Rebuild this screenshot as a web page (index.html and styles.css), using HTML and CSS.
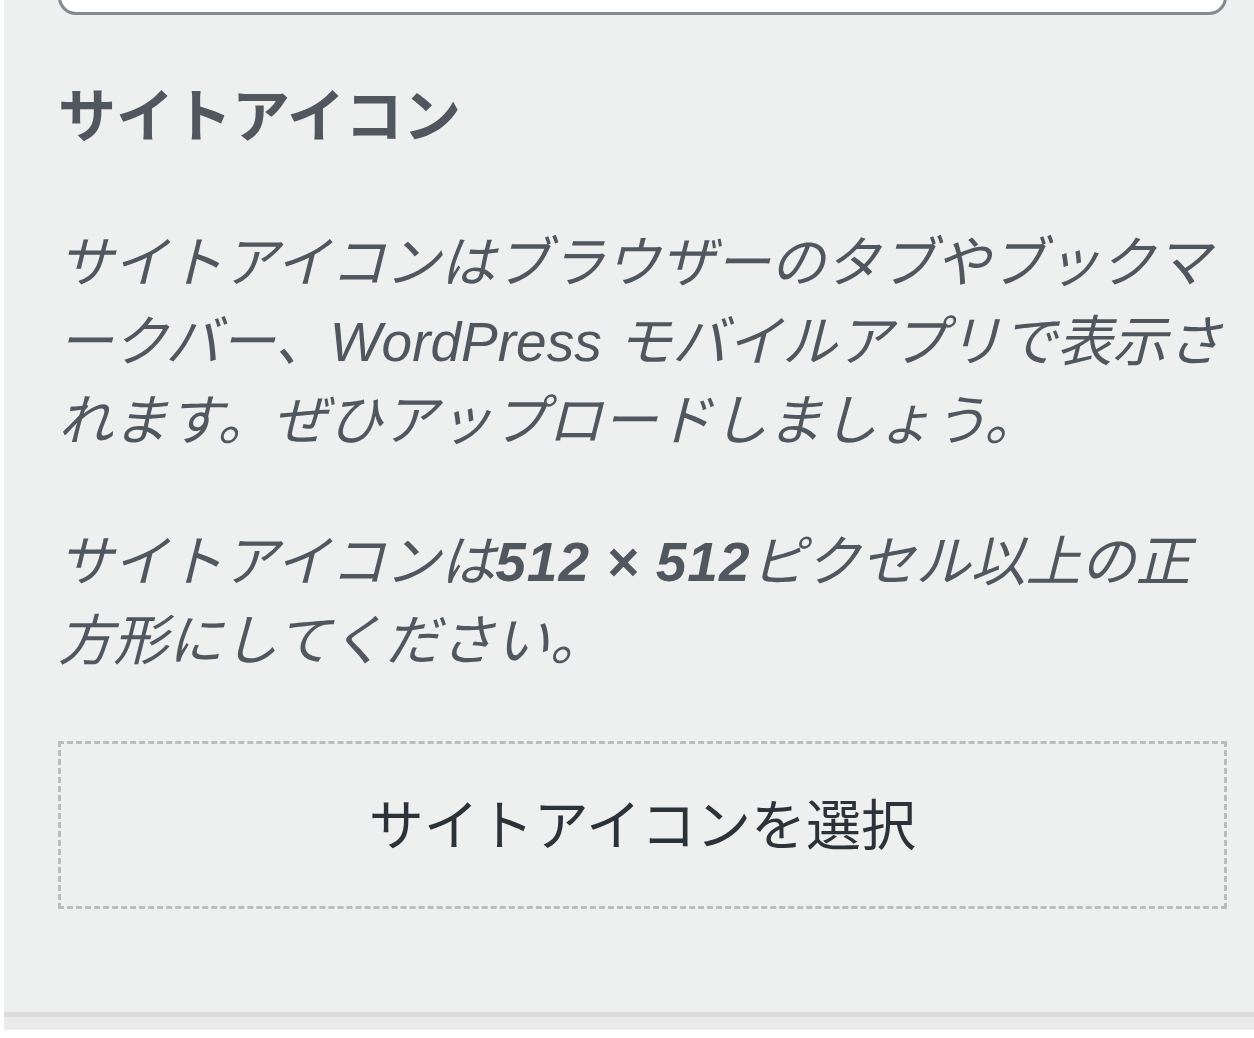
FILE: index.html
```
<!DOCTYPE html>
<html lang="ja">
<head>
    <meta charset="UTF-8">
    <meta name="viewport" content="width=device-width, initial-scale=1.0">
    <title>サイトアイコン</title>
    <link rel="stylesheet" href="styles.css">
</head>
<body>
    <div class="panel">
        <div class="field"></div>
        <h3 class="control-title">サイトアイコン</h3>
        <p class="description">サイトアイコンはブラウザーのタブやブックマークバー、WordPress モバイルアプリで表示されます。ぜひアップロードしましょう。</p>
        <p class="description description-size">サイトアイコンは<strong>512 × 512</strong>ピクセル以上の正方形にしてください。</p>
        <button class="upload-button" type="button"><span>サイトアイコンを選択</span></button>
        <div class="panel-footer"></div>
    </div>
</body>
</html>
```

FILE: styles.css
```
:root {
    --panel-bg: #eeefef;
    --text: #50575e;
    --dark: #2c3338;
    --dash: #bbbdc1;
}
body {
    margin: 0;
    background: #fff;
    font-family: "Liberation Sans", "Noto Sans CJK JP", sans-serif;
    overflow: hidden;
}
.panel {
    margin-left: 4px;
    height: 1030px;
    background: var(--panel-bg);
    padding: 0 27px 0 54px;
    display: flex;
    flex-direction: column;
    overflow: hidden;
}
.field {
    flex: none;
    height: 40px;
    margin-top: -31px;
    background: #fff;
    border: 3px solid #868a90;
    border-radius: 18px;
}
.control-title {
    margin: 62px 0 0;
    font-size: 58px;
    line-height: 80px;
    font-weight: 700;
    color: var(--text);
}
.description {
    margin: 67px 0 0;
    font-size: 55px;
    line-height: 79px;
    font-style: italic;
    color: var(--text);
}
.description strong {
    letter-spacing: 1px;
}
.description-size {
    margin-top: 62px;
}
.upload-button {
    flex: none;
    margin-top: 60px;
    height: 168px;
    padding: 0 0 8px;
    background: transparent;
    border: 3px dashed var(--dash);
    font-family: inherit;
    font-size: 55px;
    color: var(--dark);
    cursor: pointer;
}
.panel-footer {
    flex: none;
    margin: 103px -27px 0 -54px;
    height: 5px;
    background: #dcdcde;
    border-bottom: 12px solid #ebebeb;
}
```
